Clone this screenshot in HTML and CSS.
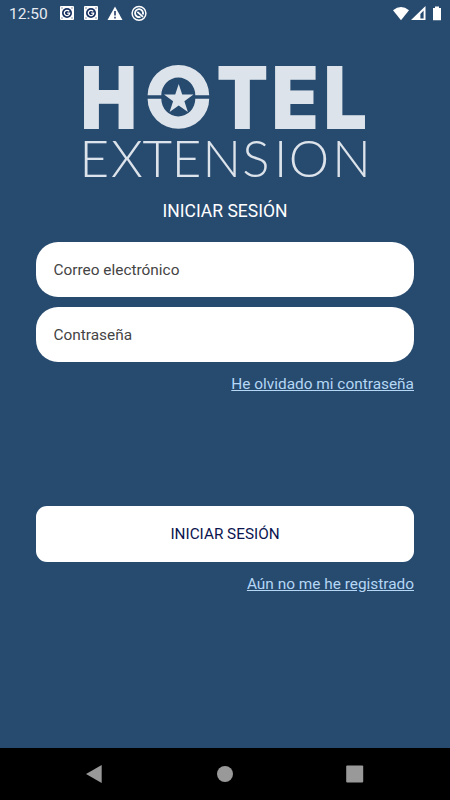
FILE: index.html
```html
<!DOCTYPE html>
<html lang="es">
  <head>
    <meta charset="UTF-8" />
    <meta name="viewport" content="width=device-width, initial-scale=1" />
    <title>Hotel Extension</title>
    <link rel="stylesheet" href="styles.css">
  </head>
  <body>
    <header class="status-bar">
      <span class="clock">12:50</span>
      <svg class="notice" viewBox="0 0 16 16">
        <rect x="1" y="0" width="14" height="14" rx="1" fill="#fff"/>
        <circle cx="8" cy="7" r="5" fill="#17305f"/>
        <path d="M10.2 5.4A2.7 2.7 0 1 0 10.7 7.2H8.2" fill="none" stroke="#fff" stroke-width="1.3"/>
        <path d="M2.5 1.5h1v1h-1zM12.5 1.5h1v1h-1zM2.5 11.5h1v1h-1zM12.5 11.5h1v1h-1z" fill="#17305f"/>
      </svg>
      <svg class="notice" viewBox="0 0 16 16">
        <rect x="1" y="0" width="14" height="14" rx="1" fill="#fff"/>
        <circle cx="8" cy="7" r="5" fill="#17305f"/>
        <path d="M10.2 5.4A2.7 2.7 0 1 0 10.7 7.2H8.2" fill="none" stroke="#fff" stroke-width="1.3"/>
        <path d="M2.5 1.5h1v1h-1zM12.5 1.5h1v1h-1zM2.5 11.5h1v1h-1zM12.5 11.5h1v1h-1z" fill="#17305f"/>
      </svg>
      <svg class="notice" viewBox="0 0 16 16">
        <path d="M8 .4L15.5 14H.5z" fill="#fff"/>
        <path d="M8 5v4.6M8 10.8v1.6" stroke="#17305f" stroke-width="1.5"/>
      </svg>
      <svg class="notice" viewBox="0 0 16 16">
        <circle cx="8" cy="7.3" r="6.9" fill="none" stroke="#fff" stroke-width="1.5"/>
        <path d="M9.5 10.9A4 4 0 1 1 11.8 8.5M6.4 5.9l5.6 5" fill="none" stroke="#fff" stroke-width="1.8"/>
      </svg>
      <svg class="signals" viewBox="0 0 52 18">
        <path d="M1 5.2Q9 -1.4 17 5.2L9 15.2z" fill="#fff"/>
        <path d="M33.5 1V15H19zM31.6 5.6L28.4 9V13.4h3.2z" fill="#fff" fill-rule="evenodd"/>
        <path d="M41 3h2V1.4h4V3h2v12.2h-8z" fill="#fff"/>
      </svg>
    </header>

    <main class="login">
      <svg class="logo" viewBox="80 60 290 124" role="img" aria-label="Hotel Extension">
        <g class="logo-bold">
          <text transform="translate(80.4 129) scale(.87 1)">H</text>
          <text transform="translate(216.4 129) scale(.87 1)">T</text>
          <text transform="translate(271.4 129) scale(.89 1)">E</text>
          <text transform="translate(323.6 129) scale(.89 1)">L</text>
        </g>
        <!-- ring with the star -->
        <path class="logo-mark" d="M147.6 95.2A30.8 30.2 0 0 1 209.2 95.2H195.3A17 17.6 0 0 0 161.3 95.2zM147.6 98.8A30.8 30 0 0 0 209.2 98.8H195.3A17 17.6 0 0 1 161.3 98.8z"/>
        <path class="logo-mark" d="M178.7 84L182.2 94.6H193.5L184.4 101.3L187.9 112L178.7 105.5L169.6 112L173.1 101.3L164 94.6H175.2z"/>
        <text class="logo-light" x="79.6 111 142.5 171.7 202.5 242.3 274 288.7 332.2" y="177">EXTENSION</text>
      </svg>

      <h1 class="title">INICIAR SESIÓN</h1>

      <form class="login-form">
        <input class="field" type="email" name="email" placeholder="Correo electrónico" />
        <input class="field" type="password" name="password" placeholder="Contraseña" />
        <a class="link" href="#">He olvidado mi contraseña</a>
        <button class="submit" type="submit">INICIAR SESIÓN</button>
        <a class="link" href="#">Aún no me he registrado</a>
      </form>
    </main>

    <nav class="nav-bar">
      <svg class="nav-icon" viewBox="0 0 20 20"><path d="M17.7 1v18L2 10z"/></svg>
      <svg class="nav-icon" viewBox="0 0 20 20"><circle cx="10" cy="10" r="8"/></svg>
      <svg class="nav-icon" viewBox="0 0 20 20"><rect x="1.2" y="1.5" width="17" height="17" rx="1"/></svg>
    </nav>
  </body>
</html>
```
FILE: styles.css
```css
* {
    box-sizing: border-box;
}

body {
    margin: 0;
    height: 800px;
    display: flex;
    flex-direction: column;
    background-color: #274a6f;
    font-family: Roboto, "Liberation Sans", sans-serif;
    color: #fff;
}

.status-bar {
    display: flex;
    align-items: center;
    height: 27px;
    padding: 0 6px 0 9px;
}

.clock {
    width: 50px;
    font-size: 15.5px;
    color: #e6ebf1;
}

.notice {
    width: 16px;
    height: 16px;
    margin-right: 8px;
    overflow: visible;
}

.signals {
    width: 52px;
    height: 18px;
    margin-left: auto;
}

.login {
    flex: 1;
    display: flex;
    flex-direction: column;
    padding: 33px 36px 0;
}

.logo {
    width: 290px;
    height: 124px;
    margin-left: 44px;
    overflow: visible;
}

.logo-bold {
    font-family: Inter, sans-serif;
    font-size: 86.6px;
    font-weight: 900;
    fill: #dce3ea;
}

.logo-mark {
    fill: #dce3ea;
}

.logo-light {
    font-family: Lato, sans-serif;
    font-size: 51px;
    font-weight: 300;
    fill: #dce3ea;
}

.title {
    margin: 16px 0 0;
    font-size: 17.5px;
    font-weight: 400;
    line-height: 22px;
    text-align: center;
}

.login-form {
    display: flex;
    flex-direction: column;
    margin-top: 20px;
}

.field {
    height: 55px;
    margin-bottom: 10.4px;
    padding: 1px 17.5px 0;
    border: none;
    border-radius: 22px;
    background-color: #fff;
    font-family: inherit;
    font-size: 15.4px;
}

.field::placeholder {
    color: #444;
}

.link {
    align-self: flex-end;
    margin-top: 1px;
    font-size: 15.4px;
    line-height: 20px;
    color: #b5d7f5;
}

.submit {
    height: 56px;
    margin: 112.2px 0 11px;
    padding-top: 2px;
    border: none;
    border-radius: 11px;
    background-color: #fff;
    font-family: inherit;
    font-size: 15.3px;
    color: #0b1550;
}

.nav-bar {
    display: flex;
    align-items: center;
    justify-content: space-between;
    height: 52px;
    padding: 0 85px 0 84px;
    background-color: #000;
}

.nav-icon {
    width: 20px;
    height: 20px;
    fill: #999;
}
```
